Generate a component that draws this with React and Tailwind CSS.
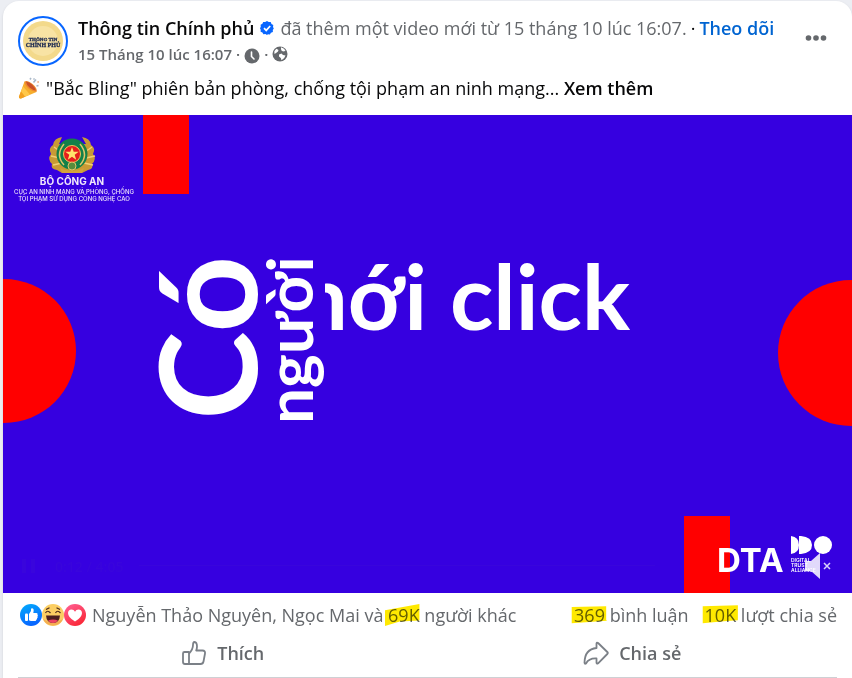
import React from "react";

function Avatar() {
  return (
    <svg viewBox="0 0 50 50" className="h-[50px] w-[50px] shrink-0" role="img" aria-label="Thông tin Chính phủ">
      <circle cx="25" cy="25" r="24" fill="#fff" stroke="#0866ff" strokeWidth="2" />
      <circle cx="25" cy="25" r="20" fill="#f3d98b" />
      <circle cx="25" cy="25" r="15" fill="#f8e3a4" />
      <g fontFamily="Liberation Serif, serif" fontWeight="700" fill="#1c2950" stroke="#1c2950" strokeWidth="0.3" textAnchor="middle">
        <text x="25" y="25" fontSize="5">THÔNG TIN</text>
        <text x="25" y="31" fontSize="6">CHÍNH PHỦ</text>
      </g>
    </svg>
  );
}

function VerifiedIcon() {
  return (
    <svg viewBox="0 0 14 14" className="h-[14px] w-[14px] shrink-0" role="img" aria-label="Đã xác minh">
      <path
        d="M7 0l1.7 1.1 2-.1.8 1.9 1.8 1-.3 2 .8 1.6-1 1.5.1 2-2 .8-1 1.700-2-.2L7 14l-1.600-.9-2 .2-1-1.700-1.800-.8.1-2L0 7.300l.8-1.500-.2-2 1.800-1 .8-1.800 2 .1z"
        fill="#0866ff"
      />
      <path d="M4 7.200l2.200 2.200L10.200 5" fill="none" stroke="#fff" strokeWidth="1.700" />
    </svg>
  );
}

function ClockIcon() {
  return (
    <svg viewBox="0 0 16 16" className="mt-1 h-4 w-4" aria-hidden="true">
      <circle cx="8" cy="8" r="7.500" fill="#65686c" />
      <path d="M7.500 4v4.500l2.500 2.500" fill="none" stroke="#fff" strokeWidth="1.600" strokeLinecap="round" />
    </svg>
  );
}

function GlobeIcon() {
  return (
    <svg viewBox="0 0 16 16" className="h-4 w-4" role="img" aria-label="Công khai">
      <circle cx="8" cy="8" r="7.500" fill="#65686c" />
      <path d="M9 1.300Q12 2 13.500 4.500L12 5.500 9.800 5 9 3.200zM2.300 5.500Q3 3.800 4.500 2.800L6.500 4 6 5.500 4 7 2.500 8zM7 8.500l2.500-1 1.500 1.500 2.500.5q-1 3.500-4 4.700l-.7-2.200L7 10.500z" fill="#fff" />
    </svg>
  );
}

function PartyIcon() {
  return (
    <svg viewBox="0 0 22 22" className="h-[22px] w-[22px] shrink-0" aria-hidden="true">
      <path d="M6.500 4.500L18.500 15 3 21.500Q.5 22 1 19.500z" fill="#f6ae2d" />
      <path d="M5 9.500l7 8-5 2.300L3 14.500z" fill="#ffc84a" />
      <path d="M3 14.500l4 5.300-4 1.700Q.5 22 1 19.500z" fill="#f3a021" />
      <path d="M6.500 4.500Q9 2.500 14.500 7T18.500 15Q14.500 15 10.500 11.500T6.500 4.500" fill="#f08a2e" />
      <path d="M8 4.800Q10.500 4 14 7.500T17.800 13.500Q14.500 13 11.500 10.500T8 4.800" fill="#c9512a" />
      <path d="M12 2.500l1-1.500M15.500 5.500l2.500-3M18.500 9l2-.5M15.500 1.500l1 1" stroke="#a9b7c8" strokeWidth="1.600" />
      <path d="M19.500 5h1.200" stroke="#e78b51" strokeWidth="1.500" />
    </svg>
  );
}

function LikeBadge() {
  return (
    <svg viewBox="0 0 22 22" className="h-[22px] w-[22px]" aria-hidden="true">
      <defs>
        <linearGradient id="likeFill" x2="0.4" y2="1">
          <stop stopColor="#02adfc" />
          <stop offset="1" stopColor="#0866ff" />
        </linearGradient>
      </defs>
      <circle cx="11" cy="11" r="11" fill="url(#likeFill)" />
      <rect x="5" y="9.500" width="3" height="7.500" rx="1" fill="#fff" />
      <path d="M9 10l2-3V5.200q0-1 1-1 2 .2 1.600 3L13.300 9h3.200q1.500.3 1 1.800.8.700 0 1.700.5 1-.4 1.700.1 1.300-.8 1.500 0 1.300-1.300 1.300h-4q-1 0-2-.7z" fill="#fff" />
    </svg>
  );
}

function HahaBadge() {
  return (
    <svg viewBox="0 0 22 22" className="h-[22px] w-[22px]" aria-hidden="true">
      <circle cx="11" cy="11" r="11" fill="#fbce63" />
      <path d="M1 15a11 11 0 0 0 20 0q-10 7-20 0" fill="#f4ad52" />
      <path d="M4 11.500h14q-.5 7.500-7 7.500t-7-7.500" fill="#4b1f20" />
      <path d="M6 16.500q5-2 10 0-2 2.500-5 2.500t-5-2.500" fill="#ef4562" />
      <path d="M3.500 9q2-3.500 5 0M13.500 9q2-3.500 5 0M4 5.500l3.500-1.700M18 5.500l-3.500-1.700" fill="none" stroke="#4b2a1c" strokeWidth="1.200" />
    </svg>
  );
}

function LoveBadge() {
  return (
    <svg viewBox="0 0 22 22" className="h-[22px] w-[22px]" aria-hidden="true">
      <defs>
        <linearGradient id="loveFill" x2="0.6" y2="1">
          <stop stopColor="#ff6298" />
          <stop offset="1" stopColor="#fa2939" />
        </linearGradient>
      </defs>
      <circle cx="11" cy="11" r="11" fill="url(#loveFill)" />
      <path d="M11 17.500Q4 13.500 4 9q.2-3.500 3.500-3.500 2.400 0 3.500 2.200 1.100-2.200 3.500-2.200Q17.800 5.500 18 9q0 4.500-7 8.500" fill="#fff" />
    </svg>
  );
}

function ThumbIcon() {
  return (
    <svg viewBox="0 0 26 26" className="h-[26px] w-[26px]" fill="none" stroke="#7b8087" strokeWidth="1.800" strokeLinejoin="round" aria-hidden="true">
      <path d="M3.500 12h4.500v12H4q-2 0-2-2v-8.500q0-1.500 1.500-1.500z" />
      <path d="M8 13.500Q12 9.500 12 5q0-3 1.500-3Q16 2.200 16 6.500q0 2-.8 4h6.300q3 .2 2.500 3l-1.500 8q-.5 2.500-3 2.500H8" />
    </svg>
  );
}

function ShareIcon() {
  return (
    <svg viewBox="0 0 26 26" className="h-[26px] w-[26px]" fill="none" stroke="#7b8087" strokeWidth="1.800" strokeLinejoin="round" aria-hidden="true">
      <path d="M13.500 3.500q.3-1.500 1.600-.5l9.200 9q1 1 0 2l-9.200 9.300q-1.300.9-1.600-.5v-4.300Q6 18 3 23.500q-1.300.8-1.500-.8Q1.800 9 13.500 8z" />
    </svg>
  );
}

function Emblem() {
  return (
    <g>
      <path
        d="M62 137q-8 1-9 8-5 3-2 9-4 5 1 10-2 5 5 6l5 3 10 0 10 0 6-3q6-1 4-6 5-5 1-10 3-6-2-9-1-7-9-8l4 7H59z"
        fill="#c99a35"
      />
      <path d="M54 147l7 5M51 156l9 2M53 165l9-2M92 147l-7 5M95 156l-9 2M93 165l-9-2" stroke="#f1cf72" strokeWidth="1.500" />
      <circle cx="72" cy="154" r="15.500" fill="#138049" />
      <path d="M64 144q-9 11 0 21M80 144q9 11 0 21" fill="none" stroke="#e0c569" strokeWidth="1.500" />
      <circle cx="72" cy="154" r="8.500" fill="#e51d1d" stroke="#eec85b" />
      <path d="M72 147l1.700 4.800h5l-4 3 1.500 4.900-4.200-3-4.200 3 1.500-4.900-4-3h5z" fill="#ffe36b" />
      <path d="M60 168q12 6 24 0l-2 5H62z" fill="#d4a33c" />
      <circle cx="72" cy="166" r="4" fill="#578d3d" stroke="#e0c569" />
    </g>
  );
}

function VideoFrame() {
  return (
    <svg viewBox="3 115 849 478" className="block w-full bg-[#3600e0]" role="img" aria-label="Bắc Bling video">
      <defs>
        <clipPath id="wordReveal">
          <rect x="325" y="240" width="110" height="110" />
        </clipPath>
      </defs>
      <g fill="#ff0000">
        <rect x="143" y="115" width="46" height="79" />
        <circle cx="4" cy="351" r="72" />
        <circle cx="851" cy="353" r="73" />
        <rect x="684" y="516" width="46" height="77" />
      </g>

      <Emblem />
      <g fill="#f0e6fb" fontFamily="Inter, Liberation Sans, sans-serif" textAnchor="middle">
        <text x="72" y="185" fontSize="10" fontWeight="700">BỘ CÔNG AN</text>
        <text x="74" y="194" fontSize="6" fontWeight="500">CỤC AN NINH MẠNG VÀ PHÒNG, CHỐNG</text>
        <text x="74" y="201" fontSize="6" fontWeight="500">TỘI PHẠM SỬ DỤNG CÔNG NGHỆ CAO</text>
      </g>

      <g fill="#fff" fontFamily="Lato, sans-serif" fontWeight="700">
        <text transform="translate(257 420) rotate(-90)" fontSize="134">Có</text>
        <text transform="translate(313 424) rotate(-90)" fontSize="64">người</text>
        <text x="427" y="330" fontSize="90" textAnchor="end" clipPath="url(#wordReveal)">mới</text>
        <text x="630" y="330" fontSize="90" textAnchor="end">click</text>
      </g>

      <g fill="#3905dc">
        <rect x="22" y="559" width="4" height="14" />
        <rect x="31" y="559" width="4" height="14" />
        <text x="55" y="572" fontSize="14" fontWeight="600" fontFamily="Open Sans, sans-serif">0:12 / 4:05</text>
        <rect x="139" y="565" width="516" height="1" />
      </g>

      <g fill="#fff" fontFamily="Inter, Liberation Sans, sans-serif">
        <text x="717" y="572" fontSize="33" fontWeight="700">DTA</text>
        <path d="M791 536q8 1 8 9t-8 9zM799 536h2q11 1 11 9t-11 9h-2z" />
        <circle cx="823" cy="545" r="9" />
        <g fontSize="5" fontWeight="600">
          <text x="791" y="562">DIGITAL</text>
          <text x="791" y="567">TRUST</text>
          <text x="791" y="572">ALLIANCE</text>
        </g>
      </g>
    </svg>
  );
}

function Marked({ children, points }) {
  return (
    <span className="relative inline-block">
      {children}
      <svg
        viewBox="0 0 100 100"
        preserveAspectRatio="none"
        className="absolute -left-[3px] top-[3px] h-[22px] w-[calc(100%+5px)] mix-blend-multiply"
        aria-hidden="true"
      >
        <polygon points={points} fill="#ffe900" />
      </svg>
    </span>
  );
}

export default function App() {
  return (
    <div className="bg-[#eceef3] pt-px pl-[3px] font-['Open_Sans','Noto_Sans',sans-serif] text-lg leading-7 text-[#65686c]">
      <article className="rounded-t-2xl bg-white shadow">
        <header className="flex gap-[10px] pt-[15px] pr-6 pl-[15px]">
          <Avatar />
          <div className="-mt-[2px] min-w-0 flex-1">
            <div className="flex items-center whitespace-nowrap">
              <a href="#page" className="font-semibold text-[#080809]">Thông tin Chính phủ</a>
              <span className="mx-[6px] flex"><VerifiedIcon /></span>
              <span>đã thêm một video mới từ 15 tháng 10 lúc 16:07.</span>
              <span className="mx-1 text-[#080809]">·</span>
              <button type="button" className="font-semibold text-[#0064d1]">Theo dõi</button>
            </div>
            <div className="flex items-center gap-1 text-[15px] leading-6 font-semibold">
              <a href="#post">15 Tháng 10 lúc 16:07</a>
              <span>·</span>
              <ClockIcon />
              <span>·</span>
              <GlobeIcon />
            </div>
          </div>
          <button type="button" aria-label="Hành động với bài viết" className="flex h-11 items-center">
            <svg viewBox="0 0 24 24" className="h-6 w-6" fill="#65686c">
              <circle cx="4.500" cy="12" r="2.800" />
              <circle cx="12" cy="12" r="2.800" />
              <circle cx="19.500" cy="12" r="2.800" />
            </svg>
          </button>
        </header>

        <div className="flex items-center gap-[6px] px-[15px] pt-2 pb-[13px] whitespace-nowrap text-[#080809]">
          <PartyIcon />
          <p>
            "Bắc Bling" phiên bản phòng, chống tội phạm an ninh mạng...{" "}
            <button type="button" className="font-semibold">Xem thêm</button>
          </p>
        </div>

        <div className="relative">
          <VideoFrame />
          <button type="button" aria-label="Bật tiếng" className="absolute right-5 bottom-[14px]">
            <svg viewBox="0 0 28 26" className="h-[26px] w-7">
              <path d="M1 8h6l9-8v26l-9-8H1z" fill="#fff" fillOpacity="0.850" />
              <path d="M20 10l6 6M26 10l-6 6" stroke="#d9d1fa" strokeWidth="1.500" />
            </svg>
          </button>
        </div>

        <div className="px-[15px] pt-2">
          <div className="flex items-center justify-between whitespace-nowrap">
            <div className="flex items-center">
              <div className="mr-[6px] ml-[2px] flex">
                <LikeBadge />
                <HahaBadge />
                <LoveBadge />
              </div>
              <span>
                Nguyễn Thảo Nguyên, Ngọc Mai và{" "}
                <Marked points="0,28 94,0 94,75 40,80 0,100">69K</Marked> người khác
              </span>
            </div>
            <div className="flex gap-4">
              <span>
                <Marked points="2,14 98,10 98,72 100,76 2,88">369</Marked> bình luận
              </span>
              <span>
                <Marked points="2,10 98,6 98,74 60,78 2,88">10K</Marked> lượt chia sẻ
              </span>
            </div>
          </div>
          <div className="grid h-[49px] grid-cols-2 border-b border-[#ced0d4] text-lg font-semibold">
            <button type="button" className="flex items-center justify-center gap-[10px]">
              <ThumbIcon />
              Thích
            </button>
            <button type="button" className="flex items-center justify-center gap-[10px]">
              <ShareIcon />
              Chia sẻ
            </button>
          </div>
        </div>
      </article>
    </div>
  );
}
